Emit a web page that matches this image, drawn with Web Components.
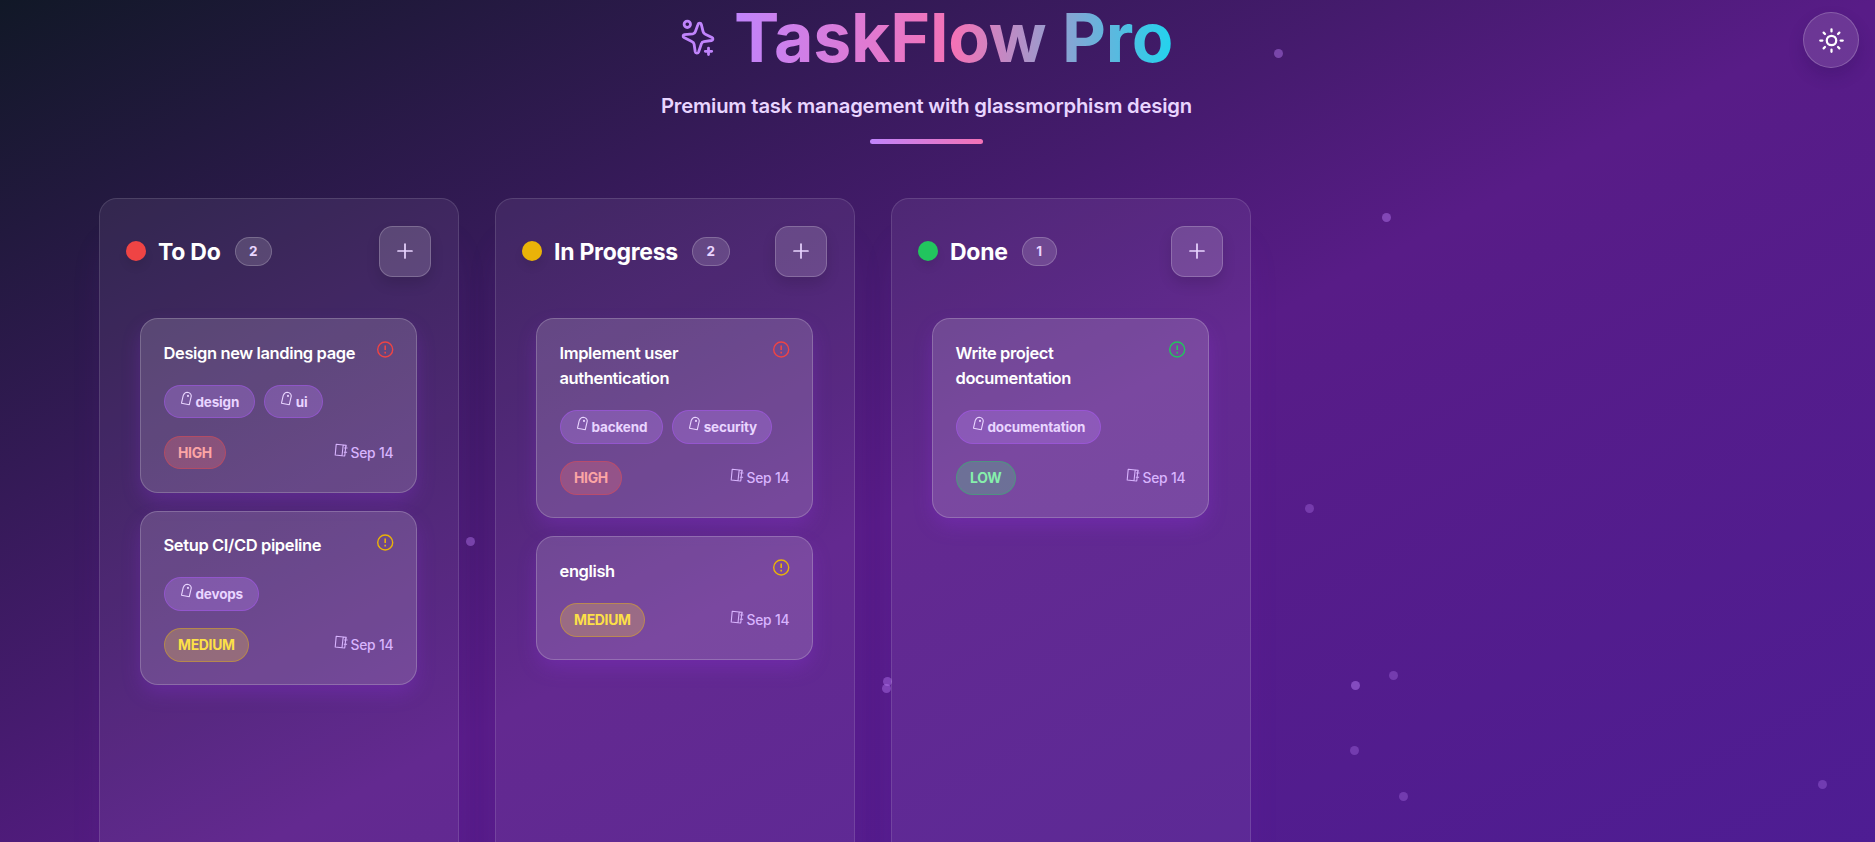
<!DOCTYPE html>
<html lang="en">
<head>
<meta charset="utf-8">
<title>TaskFlow Pro</title>
<style>
  html, body { margin: 0; height: 100%; overflow: hidden; }
  body { font-family: Inter, "Liberation Sans", sans-serif; }
</style>
</head>
<body>
<task-app></task-app>

<template id="app-tpl">
  <style>
    :host { display: block; position: relative; width: 100%; height: 842px; overflow: hidden;
      background: linear-gradient(to bottom right, #111827 0%, #581c87 50%, #4c1d95 100%); background-size: 1875px 980px; color: #fff; }
    header { display: flex; flex-direction: column; align-items: center; width: 1853px; height: 198px; }
    .brand { display: flex; align-items: center; gap: 18px; height: 74px; }
    .brand svg { display: block; }
    h1 { margin: 0; font-size: 68px; line-height: 74px; font-weight: 700; letter-spacing: -.25px;
      background: linear-gradient(90deg, #c084fc, #f472b6 50%, #22d3ee); -webkit-background-clip: text; background-clip: text; color: transparent; }
    p { margin: 16px 0 0; font-size: 20.25px; line-height: 32px; font-weight: 600; letter-spacing: -.19px; color: #e9d5ff; }
    hr { margin: 17px 0 0; border: 0; width: 113px; height: 5px; border-radius: 3px; background: linear-gradient(90deg, #c084fc, #f472b6); }
    main { display: flex; gap: 36px; padding-left: 99px; }
  </style>
  <float-dots></float-dots>
  <header>
    <div class="brand">
      <svg width="36" height="40" viewBox="0 0 36 40" fill="none" stroke="#c084fc" stroke-width="2.8" stroke-linecap="round" stroke-linejoin="round"><circle cx="7.300" cy="7.300" r="3.200"/><path d="M18 7.400C18.500 5.700 20.900 5.700 21.300 7.400L23.100 14.600C23.400 15.800 24.200 16.700 25.300 17.200L32 20.400C33.400 21.200 33.200 23.200 31.600 23.500L23.800 24.600C22.500 24.800 21.600 25.700 21.300 27L18.600 35C18 36.600 15.500 36.500 15.200 34.800L14.100 27.300C13.900 26 13 25 11.800 24.500L4 20.600C2.600 19.800 2.900 17.900 4.400 17.600L12.800 16.900C14 16.700 14.900 15.900 15.300 14.700Z"/><path d="M28.500 31.100v6.400M25.300 34.300h6.400"/></svg>
      <h1>TaskFlow Pro</h1>
    </div>
    <p>Premium task management with glassmorphism design</p>
    <hr>
  </header>
  <main>
    <task-column name="To Do" count="2" color="#ef4444">
      <task-card level="high" tags="design,ui">Design new landing page</task-card>
      <task-card level="medium" tags="devops">Setup CI/CD pipeline</task-card>
    </task-column>
    <task-column name="In Progress" count="2" color="#eab308">
      <task-card level="high" tags="backend,security">Implement user authentication</task-card>
      <task-card level="medium">english</task-card>
    </task-column>
    <task-column name="Done" count="1" color="#22c55e">
      <task-card level="low" tags="documentation">Write project documentation</task-card>
    </task-column>
  </main>
  <theme-button></theme-button>
</template>

<script>
const $tpl = id => document.getElementById(id).content.cloneNode(true);

class FloatDots extends HTMLElement {
  connectedCallback() {
    const dots = [[1278.5,53,.42],[1386.5,217,.42],[1309.5,508,.3],[1355.5,685,.45],[1393.5,675,.3],[1354.5,750,.3],[1403.5,796,.3],[1822.5,784,.3],[470,541.5,.4],[887,681,.4],[886,688.5,.4]];
    this.attachShadow({mode:'open'}).innerHTML = `
      <style>:host{position:absolute;inset:0;display:block}
      i{position:absolute;width:9px;height:9px;margin:-4.5px;border-radius:50%}</style>
      ${dots.map(([x,y,o]) => `<i style="left:${x}px;top:${y}px;background:rgba(192,132,252,${o})"></i>`).join('')}`;
  }
}

class ThemeButton extends HTMLElement {
  connectedCallback() {
    this.attachShadow({mode:'open'}).innerHTML = `
      <style>:host{position:absolute;right:16px;top:12px;display:block}
      button{display:flex;align-items:center;justify-content:center;width:56px;height:56px;padding:0;border-radius:50%;
        border:1px solid rgba(255,255,255,.2);background:rgba(255,255,255,.12);color:#fff;box-shadow:0 8px 16px rgba(31,10,70,.2)}
      svg{display:block}</style>
      <button aria-label="Toggle theme"><svg width="27" height="27" viewBox="0 0 24 24" fill="none" stroke="currentColor" stroke-width="2" stroke-linecap="round"><circle cx="12" cy="12" r="4.200"/><path d="M12 2v1.900M12 20.100v1.900M2 12h1.900M20.100 12h1.900M5 5l1.200 1.200M17.800 17.800l1.200 1.200M5 19l1.200-1.200M17.800 6.200 19 5"/></svg></button>`;
  }
}

class TaskColumn extends HTMLElement {
  connectedCallback() {
    this.attachShadow({mode:'open'}).innerHTML = `
      <style>
        :host{display:block;position:relative;box-sizing:border-box;width:360px;height:760px;padding:27px 27px 27px 26px;border:1px solid rgba(255,255,255,.12);border-radius:18px;
          background:rgba(230,205,255,.08);box-shadow:0 40px 40px -14px rgba(126,34,206,.2)}
        .head{display:flex;align-items:center;height:51px}
        .dot{width:20px;height:20px;margin-top:-1px;border-radius:50%;background:${this.getAttribute('color')};box-shadow:0 6px 10px rgba(0,0,0,.08)}
        h2{margin:0 0 0 12px;font-size:23px;line-height:36px;font-weight:700;letter-spacing:-.26px}
        .count{box-sizing:border-box;margin-left:14px;height:29px;padding:0 13.5px;border:1px solid rgba(255,255,255,.2);border-radius:15px;background:rgba(255,255,255,.15);
          color:#e9d5ff;font-size:13.5px;line-height:27px;font-weight:700}
        button{display:flex;align-items:center;justify-content:center;margin-left:auto;width:52px;height:51px;padding:0;border:1px solid rgba(255,255,255,.2);border-radius:13.5px;
          background:rgba(255,255,255,.15);color:#e9d5ff;box-shadow:0 7px 14px rgba(0,0,0,.12)}
        svg{display:block;margin-top:-1px}
        .list{display:flex;flex-direction:column;gap:18px;margin:41px 14px 0 14px}
      </style>
      <div class="head"><span class="dot"></span><h2>${this.getAttribute('name')}</h2><span class="count">${this.getAttribute('count')}</span>
        <button aria-label="Add task"><svg width="18" height="18" viewBox="0 0 18 18" stroke="currentColor" stroke-width="1.700" stroke-linecap="round"><path d="M9 2v14M2 9h14"/></svg></button></div>
      <div class="list"><slot></slot></div>`;
  }
}

const LEVELS = {
  high:   {fg:'#fca5a5', fill:'248,113,113', edge:'239,68,68', icon:'#ef4444'},
  medium: {fg:'#fde047', fill:'250,204,70', edge:'234,179,8', icon:'#eab308'},
  low:    {fg:'#86efac', fill:'74,222,128', edge:'34,197,94', icon:'#22c55e'}
};
const TAG_ICON = `<svg class="ti" width="13" height="15" viewBox="0 0 13 15" fill="none" stroke="currentColor" stroke-width="1.100" stroke-linejoin="round"><path d="M1.500 12.200 3.200 4.600C4 2.600 5.400 1.400 7.200 1.300c2.200.2 3.800 1.500 4.100 3.600L9.300 13.700z"/><circle cx="8" cy="4.900" r=".5"/></svg>`;
const CAL_ICON = `<svg class="ci" width="14" height="14" viewBox="0 0 14 14" fill="none" stroke="currentColor" stroke-width="1.100" stroke-linejoin="round"><path d="M2.200 1.200 9.200 2 8 12.800 1.200 12zM9.200 2l3 .4-.2 1.600M8 12.800l2.700.2.300-2.200M10.200 5h3.300M9.800 9.200h3.300M11.800 3l-1 9.500"/></svg>`;

class TaskCard extends HTMLElement {
  connectedCallback() {
    const level = this.getAttribute('level'), l = LEVELS[level];
    const tags = (this.getAttribute('tags') || '').split(',').filter(Boolean);
    this.attachShadow({mode:'open'}).innerHTML = `
      <style>
        :host{display:flex;flex-direction:column;gap:17.5px;box-sizing:border-box;padding:22.5px;border:1px solid rgba(255,255,255,.2);border-radius:18px;
          background:rgba(255,255,255,.15);box-shadow:0 9px 20px -2px rgba(147,51,234,.28)}
        svg{display:block;flex:none}
        .top{display:flex;justify-content:space-between;align-items:flex-start}
        .top svg{margin:-.7px 0 0}
        h3{margin:-1px 0 1px;max-width:195px;font-size:16.5px;line-height:25.7px;font-weight:600;letter-spacing:-.38px}
        .tags{display:flex;gap:9px}
        .tag{display:flex;box-sizing:border-box;height:33.5px;padding:0 14.5px 0 15px;border:1px solid rgba(168,85,247,.45);border-radius:17px;background:rgba(192,132,252,.28);
          color:#e9d5ff;font-size:13.5px;line-height:32px;font-weight:700;letter-spacing:-.17px}
        .ti{margin:5px 3px 0 0}
        .foot{display:flex;justify-content:space-between;height:33.5px}
        .pill{box-sizing:border-box;padding:0 13.5px;border:1px solid rgba(${l.edge},.4);border-radius:17px;background:rgba(${l.fill},.27);color:${l.fg};
          font-size:13.9px;line-height:32px;font-weight:700;letter-spacing:-.28px;text-transform:uppercase}
        .date{display:flex;color:#d8b4fe;font-size:13.8px;line-height:34.5px;font-weight:500;letter-spacing:-.15px}
        .ci{margin:7px 2px 0 0}
      </style>
      <div class="top"><h3><slot></slot></h3>
        <svg width="17" height="17" viewBox="0 0 17 17" fill="none" stroke="${l.icon}" stroke-width="1.400"><circle cx="8.200" cy="8.500" r="7.500"/><path d="M8.200 4.500v4.600M8.200 10.800v1.600" stroke-width="1.600"/></svg></div>
      ${tags.length ? `<div class="tags">${tags.map(t => `<span class="tag">${TAG_ICON}${t}</span>`).join('')}</div>` : ''}
      <div class="foot"><span class="pill">${level}</span><span class="date">${CAL_ICON}Sep 14</span></div>`;
  }
}

class TaskApp extends HTMLElement {
  connectedCallback() {
    this.attachShadow({mode:'open'}).append($tpl('app-tpl'));
  }
}
customElements.define('float-dots', FloatDots);
customElements.define('theme-button', ThemeButton);
customElements.define('task-card', TaskCard);
customElements.define('task-column', TaskColumn);
customElements.define('task-app', TaskApp);
</script>
</body>
</html>
